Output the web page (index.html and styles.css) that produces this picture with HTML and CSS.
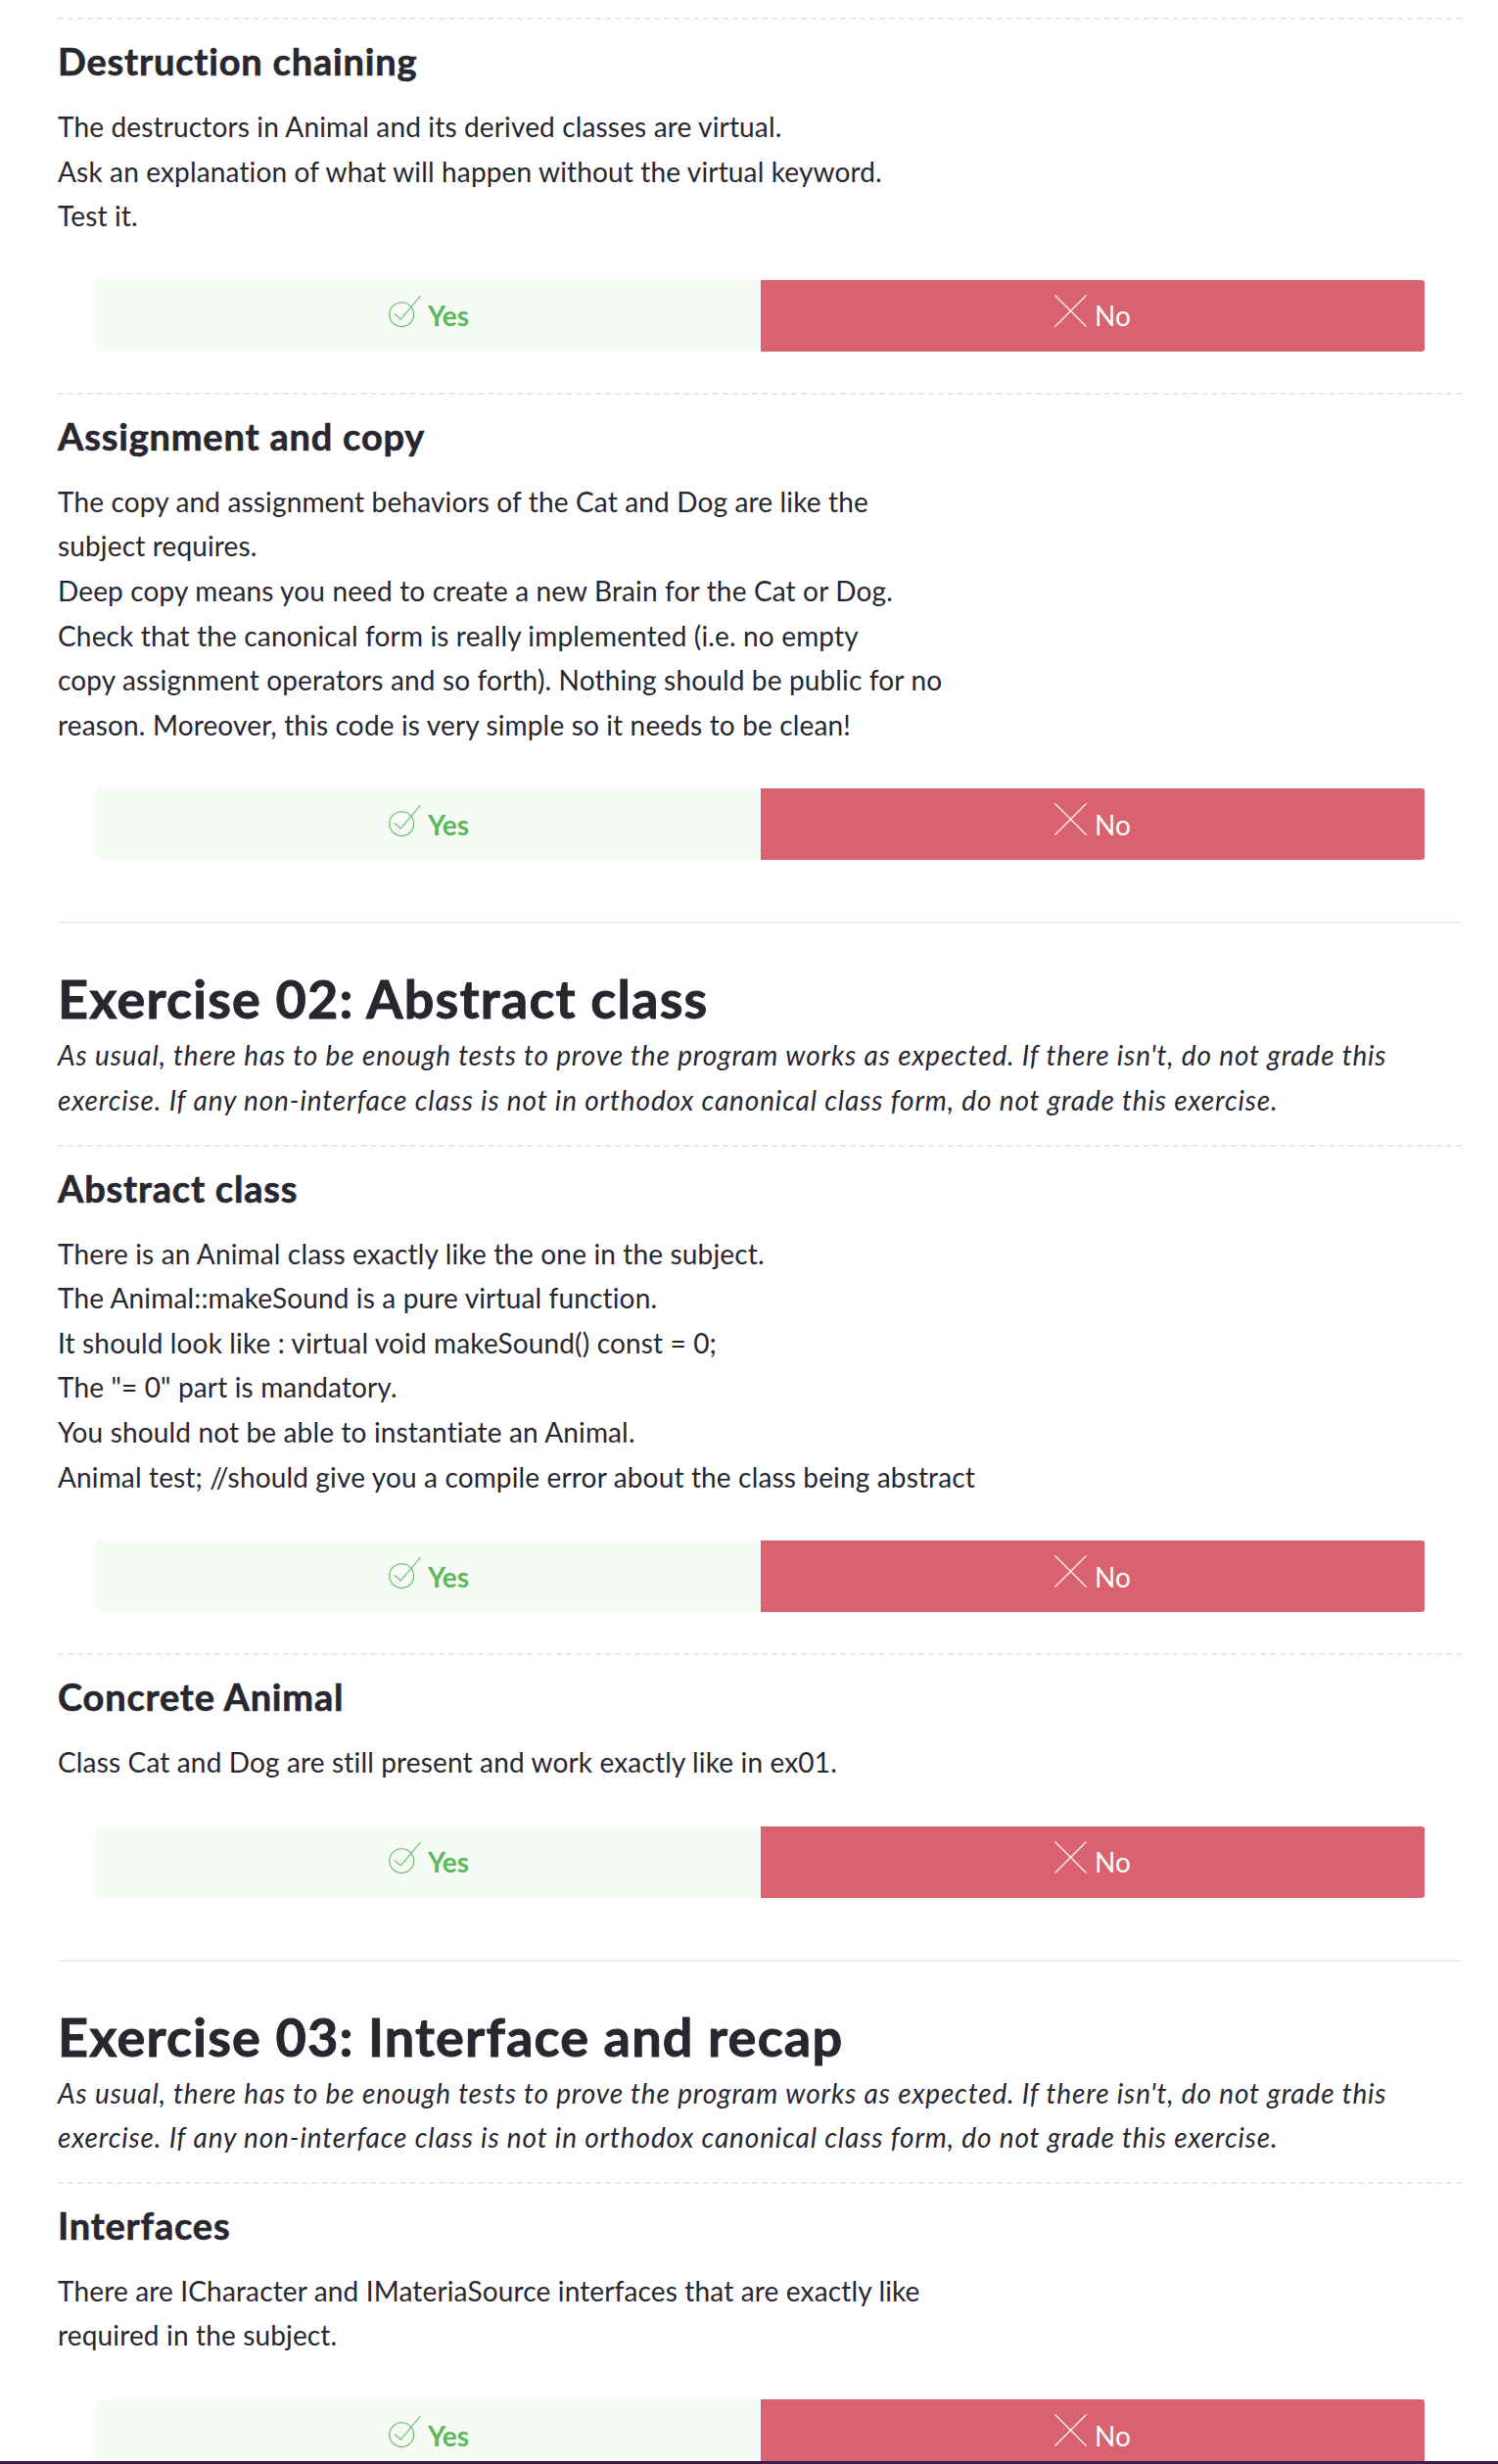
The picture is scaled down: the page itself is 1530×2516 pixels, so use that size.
FILE: index.html
```html
<!DOCTYPE html>
<html lang="en">
<head>
<meta charset="utf-8">
<title>Evaluation</title>
<link rel="stylesheet" href="styles.css">
</head>
<body>
<div class="page">
  <div class="group">
    <section class="question">
      <h3>Destruction chaining</h3>
      <p class="desc">The destructors in Animal and its derived classes are virtual.<br>Ask an explanation of what will happen without the virtual keyword.<br>Test it.</p>
      <div class="answer">
        <button class="btn yes"><svg class="ico-yes" width="34" height="34" viewBox="0 0 34 34"><circle cx="13.2" cy="20.2" r="12.4" fill="none" stroke="currentColor" stroke-width="1.1"/><polyline points="5.7,19.3 12.3,25 32.5,1" fill="none" stroke="currentColor" stroke-width="1.1"/></svg><span>Yes</span></button>
        <button class="btn no"><svg class="ico-no" width="33" height="33" viewBox="0 0 33 33"><path d="M0.5 0.5 L32.5 32.5 M32.5 0.5 L0.5 32.5" fill="none" stroke="currentColor" stroke-width="1.1"/></svg><span>No</span></button>
      </div>
    </section>
    <section class="question">
      <h3>Assignment and copy</h3>
      <p class="desc">The copy and assignment behaviors of the Cat and Dog are like the<br>subject requires.<br>Deep copy means you need to create a new Brain for the Cat or Dog.<br>Check that the canonical form is really implemented (i.e. no empty<br>copy assignment operators and so forth). Nothing should be public for no<br>reason. Moreover, this code is very simple so it needs to be clean!</p>
      <div class="answer">
        <button class="btn yes"><svg class="ico-yes" width="34" height="34" viewBox="0 0 34 34"><circle cx="13.2" cy="20.2" r="12.4" fill="none" stroke="currentColor" stroke-width="1.1"/><polyline points="5.7,19.3 12.3,25 32.5,1" fill="none" stroke="currentColor" stroke-width="1.1"/></svg><span>Yes</span></button>
        <button class="btn no"><svg class="ico-no" width="33" height="33" viewBox="0 0 33 33"><path d="M0.5 0.5 L32.5 32.5 M32.5 0.5 L0.5 32.5" fill="none" stroke="currentColor" stroke-width="1.1"/></svg><span>No</span></button>
      </div>
    </section>
  </div>

  <div class="exercise">
    <h2>Exercise 02: Abstract class</h2>
    <p class="intro">As usual, there has to be enough tests to prove the program works as expected. If there isn't, do not grade this<br>exercise. If any non-interface class is not in orthodox canonical class form, do not grade this exercise.</p>
    <section class="question">
      <h3>Abstract class</h3>
      <p class="desc">There is an Animal class exactly like the one in the subject.<br>The Animal::makeSound is a pure virtual function.<br>It should look like : virtual void makeSound() const = 0;<br>The "= 0" part is mandatory.<br>You should not be able to instantiate an Animal.<br>Animal test; //should give you a compile error about the class being abstract</p>
      <div class="answer">
        <button class="btn yes"><svg class="ico-yes" width="34" height="34" viewBox="0 0 34 34"><circle cx="13.2" cy="20.2" r="12.4" fill="none" stroke="currentColor" stroke-width="1.1"/><polyline points="5.7,19.3 12.3,25 32.5,1" fill="none" stroke="currentColor" stroke-width="1.1"/></svg><span>Yes</span></button>
        <button class="btn no"><svg class="ico-no" width="33" height="33" viewBox="0 0 33 33"><path d="M0.5 0.5 L32.5 32.5 M32.5 0.5 L0.5 32.5" fill="none" stroke="currentColor" stroke-width="1.1"/></svg><span>No</span></button>
      </div>
    </section>
    <section class="question">
      <h3>Concrete Animal</h3>
      <p class="desc">Class Cat and Dog are still present and work exactly like in ex01.</p>
      <div class="answer">
        <button class="btn yes"><svg class="ico-yes" width="34" height="34" viewBox="0 0 34 34"><circle cx="13.2" cy="20.2" r="12.4" fill="none" stroke="currentColor" stroke-width="1.1"/><polyline points="5.7,19.3 12.3,25 32.5,1" fill="none" stroke="currentColor" stroke-width="1.1"/></svg><span>Yes</span></button>
        <button class="btn no"><svg class="ico-no" width="33" height="33" viewBox="0 0 33 33"><path d="M0.5 0.5 L32.5 32.5 M32.5 0.5 L0.5 32.5" fill="none" stroke="currentColor" stroke-width="1.1"/></svg><span>No</span></button>
      </div>
    </section>
  </div>

  <div class="exercise">
    <h2>Exercise 03: Interface and recap</h2>
    <p class="intro">As usual, there has to be enough tests to prove the program works as expected. If there isn't, do not grade this<br>exercise. If any non-interface class is not in orthodox canonical class form, do not grade this exercise.</p>
    <section class="question">
      <h3>Interfaces</h3>
      <p class="desc">There are ICharacter and IMateriaSource interfaces that are exactly like<br>required in the subject.</p>
      <div class="answer">
        <button class="btn yes"><svg class="ico-yes" width="34" height="34" viewBox="0 0 34 34"><circle cx="13.2" cy="20.2" r="12.4" fill="none" stroke="currentColor" stroke-width="1.1"/><polyline points="5.7,19.3 12.3,25 32.5,1" fill="none" stroke="currentColor" stroke-width="1.1"/></svg><span>Yes</span></button>
        <button class="btn no"><svg class="ico-no" width="33" height="33" viewBox="0 0 33 33"><path d="M0.5 0.5 L32.5 32.5 M32.5 0.5 L0.5 32.5" fill="none" stroke="currentColor" stroke-width="1.1"/></svg><span>No</span></button>
      </div>
    </section>
  </div>
</div>
<div class="bottom-bar"></div>
</body>
</html>
```

FILE: styles.css
```css
html, body {
  margin: 0;
  padding: 0;
  background: #ffffff;
}

body {
  font-family: Lato, "Liberation Sans", Arial, sans-serif;
  color: #28272f;
}

.page {
  margin-left: 59px;
  width: 1434px;
  padding-top: 18px;
  padding-bottom: 120px;
}

.question {
  border-top: 2px dashed #e8e8e8;
  padding: 19px 0 42px;
}

.question h3 {
  margin: 0 0 22px;
  font-size: 38px;
  line-height: 46px;
  font-weight: 700;
  letter-spacing: 0.8px;
  -webkit-text-stroke: 0.6px currentColor;
}

.desc {
  margin: 0;
  font-size: 28px;
  line-height: 45.6px;
  font-weight: 400;
  letter-spacing: 0.15px;
}

.answer {
  display: flex;
  height: 73px;
  margin: 42px 38px 0 40px;
}

.btn {
  flex: 1;
  display: flex;
  align-items: center;
  justify-content: center;
  gap: 6px;
  border: 0;
  padding: 0;
  margin: 0;
  font-family: inherit;
  font-size: 28px;
  cursor: pointer;
}

.yes {
  background: #f6fbf6;
  color: #5cb85c;
  font-weight: 700;
}

.no {
  background: #d9626e;
  color: #ffffff;
  font-weight: 400;
  border-radius: 0 3px 3px 0;
  gap: 8px;
}

.ico-yes {
  margin-bottom: 8px;
}

.ico-no {
  margin-bottom: 10px;
}

.exercise {
  margin-top: 21px;
  border-top: 2px solid #eeeeee;
  padding-top: 45px;
}

.exercise h2 {
  margin: 0 0 3px;
  font-size: 54px;
  line-height: 64px;
  font-weight: 700;
  letter-spacing: 1.2px;
  -webkit-text-stroke: 0.9px currentColor;
}

.intro {
  margin: 0 0 22px;
  font-size: 28px;
  line-height: 45.6px;
  font-style: italic;
  letter-spacing: 0.85px;
}

.bottom-bar {
  position: fixed;
  left: 0;
  right: 0;
  bottom: 0;
  height: 3px;
  background: #3a1a48;
}
```
